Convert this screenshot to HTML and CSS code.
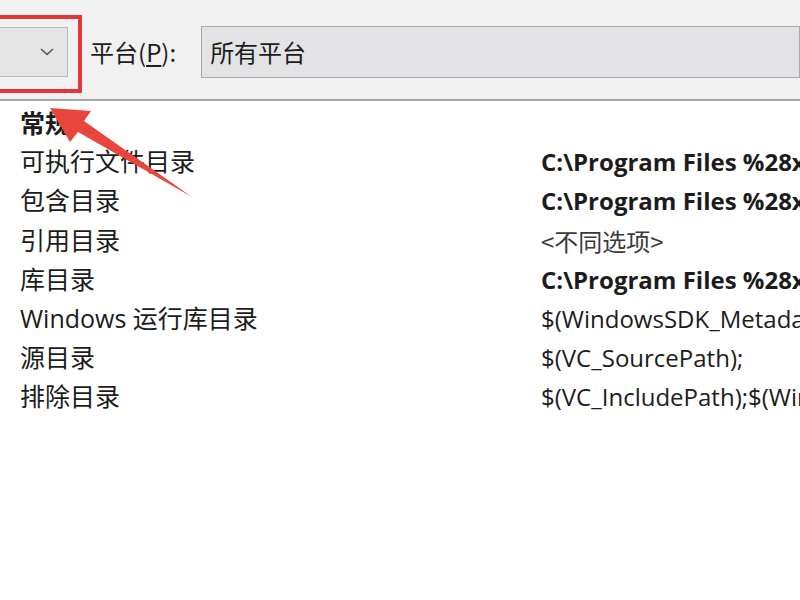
FILE: index.html
```html
<!DOCTYPE html>
<html lang="zh-CN">
<head>
<meta charset="utf-8">
<title>VC++ 目录</title>
<link rel="stylesheet" href="styles.css">
</head>
<body>
<div class="page">
  <div class="toolbar">
    <div class="combo">
      <svg class="chev" width="14" height="8" viewBox="0 0 14 8"><path d="M1 1 L7 6.5 L13 1" fill="none" stroke="#555" stroke-width="1.6"/></svg>
    </div>
    <div class="label">平台(<u>P</u>):</div>
    <div class="platform">所有平台</div>
  </div>
  <div class="grid">
    <div class="cat">常规</div>
    <div class="name">可执行文件目录</div><div class="val bold">C:\Program Files %28x86%29\Microsoft Visual Studio</div>
    <div class="name">包含目录</div><div class="val bold">C:\Program Files %28x86%29\Microsoft Visual Studio</div>
    <div class="name">引用目录</div><div class="val dim">&lt;不同选项&gt;</div>
    <div class="name">库目录</div><div class="val bold">C:\Program Files %28x86%29\Microsoft Visual Studio</div>
    <div class="name">Windows 运行库目录</div><div class="val">$(WindowsSDK_MetadataPath);</div>
    <div class="name">源目录</div><div class="val">$(VC_SourcePath);</div>
    <div class="name">排除目录</div><div class="val">$(VC_IncludePath);$(WindowsSDK_IncludePath);</div>
  </div>
  <div class="highlight"></div>
  <svg class="arrow" width="800" height="600" viewBox="0 0 800 600">
    <polygon points="50,108 91,111 84,121 192,197 78,132 70,142" fill="#e8453c"/>
  </svg>
</div>
</body>
</html>
```
FILE: styles.css
```css
html, body {
  margin: 0;
  padding: 0;
  background: #ffffff;
}
.page {
  position: relative;
  width: 800px;
  height: 600px;
  overflow: hidden;
  font-family: "Open Sans", "Noto Sans CJK SC", sans-serif;
  font-size: 25px;
  color: #1c1c1c;
}
.toolbar {
  display: flex;
  align-items: flex-start;
  height: 101px;
  padding-top: 26px;
  box-sizing: border-box;
  background: #f1f1f2;
  border-bottom: 2px solid #a7a7a9;
}
.combo {
  width: 70px;
  height: 50px;
  margin-left: -2px;
  margin-top: 1px;
  box-sizing: border-box;
  background: #e4e4e5;
  border: 1px solid #bcbcbe;
  display: flex;
  align-items: center;
  justify-content: flex-end;
  padding-right: 13px;
}
.label {
  margin-left: 22px;
  height: 52px;
  line-height: 52px;
  font-family: "Noto Sans CJK SC", sans-serif;
  font-size: 24px;
}
.label u {
  text-underline-offset: 3px;
}
.platform {
  flex: 1;
  margin-left: 25px;
  height: 52px;
  line-height: 50px;
  box-sizing: border-box;
  background: #e3e2e4;
  border: 1px solid #a9a9ab;
  padding-left: 8px;
  font-family: "Noto Sans CJK SC", sans-serif;
  font-size: 24px;
}
.grid {
  display: grid;
  grid-template-columns: 521px 1fr;
  grid-auto-rows: 39.2px;
  padding: 2px 0 0 20px;
  line-height: 39.2px;
  white-space: nowrap;
}
.cat {
  grid-column: 1 / span 2;
  font-weight: bold;
  font-family: "Noto Sans CJK SC", sans-serif;
}
.name {
  font-family: "Open Sans", "Noto Sans CJK SC", sans-serif;
}
.val {
  overflow: hidden;
  font-size: 24px;
}
.bold {
  font-weight: bold;
}
.dim {
  color: #3a3a3a;
  font-family: "Noto Sans CJK SC", sans-serif;
}
.highlight {
  position: absolute;
  left: -6px;
  top: 15px;
  width: 80px;
  height: 70px;
  border: 4px solid #e2363a;
}
.arrow {
  position: absolute;
  left: 0;
  top: 0;
}
```
